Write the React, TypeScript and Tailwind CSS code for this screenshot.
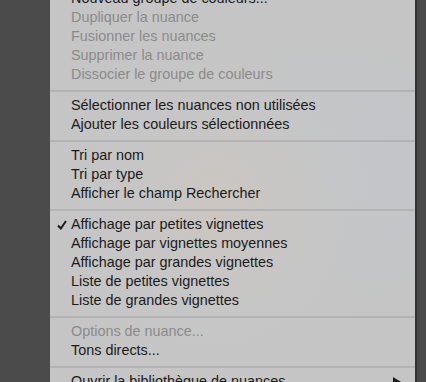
import React from "react";

type Item = { label: string; disabled?: boolean; checked?: boolean; submenu?: boolean };

const groups: Item[][] = [
  [
    { label: "Nouveau groupe de couleurs..." },
    { label: "Dupliquer la nuance", disabled: true },
    { label: "Fusionner les nuances", disabled: true },
    { label: "Supprimer la nuance", disabled: true },
    { label: "Dissocier le groupe de couleurs", disabled: true },
  ],
  [
    { label: "Sélectionner les nuances non utilisées" },
    { label: "Ajouter les couleurs sélectionnées" },
  ],
  [
    { label: "Tri par nom" },
    { label: "Tri par type" },
    { label: "Afficher le champ Rechercher" },
  ],
  [
    { label: "Affichage par petites vignettes", checked: true },
    { label: "Affichage par vignettes moyennes" },
    { label: "Affichage par grandes vignettes" },
    { label: "Liste de petites vignettes" },
    { label: "Liste de grandes vignettes" },
  ],
  [
    { label: "Options de nuance...", disabled: true },
    { label: "Tons directs..." },
  ],
  [{ label: "Ouvrir la bibliothèque de nuances", submenu: true }],
];

const Row = ({ item }: { item: Item }) => (
  <div className="relative flex h-[19px] items-center pl-[21px] pr-3">
    {item.checked && (
      <svg className="absolute left-[7px] top-[5px]" width="10" height="10" viewBox="0 0 10 10">
        <path d="M1 5.5 L3.8 8.5 L9 1" fill="none" stroke="#1c1c1c" strokeWidth="2" />
      </svg>
    )}
    <span className={item.disabled ? "text-[#8b8b8b]" : "text-[#1b1b1b]"}>{item.label}</span>
    {item.submenu && (
      <svg className="absolute right-[13px] top-[5px]" width="9" height="11" viewBox="0 0 9 11">
        <path d="M0 0 L9 5.5 L0 11 Z" fill="#1b1b1b" />
      </svg>
    )}
  </div>
);

export default function App() {
  return (
    <div className="flex h-[382px] w-[426px] overflow-hidden bg-[#4b4b4b] font-['Liberation_Sans',Arial,sans-serif] text-[14.4px]">
      <div className="w-[50px] shrink-0" />
      <div className="w-[365px] shrink-0 bg-[#c5c5c5] bg-[radial-gradient(ellipse_at_45%_55%,#cbc6c0_0%,#c6c6c6_35%,transparent_70%),radial-gradient(ellipse_at_75%_45%,#c1c6cc_0%,transparent_45%)]">
        <div className="-mt-[11px]">
          {groups.map((g, gi) => (
            <div key={gi}>
              {gi > 0 && (
                <div className="pb-[4px] pt-[6px]">
                  <div className="h-[2px] bg-[#b3b3b3]" />
                </div>
              )}
              {g.map((it) => (
                <Row key={it.label} item={it} />
              ))}
            </div>
          ))}
        </div>
      </div>
      <div className="w-[2px] shrink-0 bg-[#333333]" />
      <div className="flex-1 bg-[#4a4a4a]" />
    </div>
  );
}
